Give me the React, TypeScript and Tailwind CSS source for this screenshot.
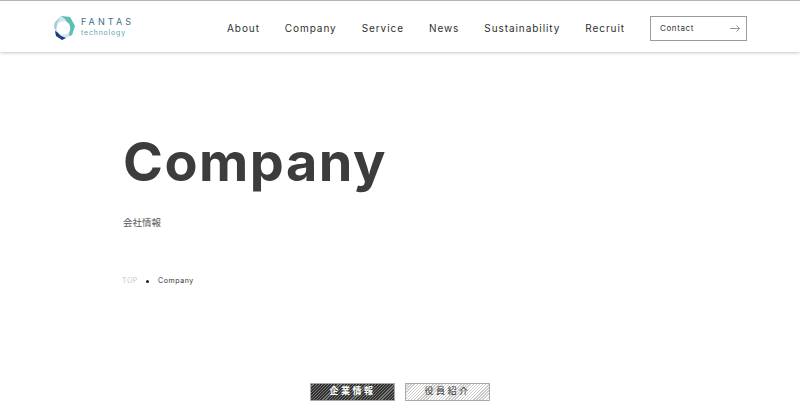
const NAV_ITEMS = ['About', 'Company', 'Service', 'News', 'Sustainability', 'Recruit'];

function Logo() {
  return (
    <div className="flex items-center gap-[5px]">
      <svg width="23" height="26" viewBox="0 0 23 26" fill="none">
        <path d="M8 1 L17 2 L22 11 L19 20 L9 25 L3 21 L1 11 Z" fill="#d3e6ee" />
        <path d="M8 1 L17 2 L22 11 L19 20 L16 21 L17 11 L12 4 Z" fill="#5fbfb2" />
        <path d="M2 16 L3 21 L9 25 L13 23 L8 21 L4 17 Z" fill="#1d3f78" />
        <path d="M8 1 L2 7 L1 12 L3 15 L4 8 Z" fill="#9cc9de" />
        <circle cx="10.5" cy="13" r="6.8" fill="#ffffff" />
      </svg>
      <div className="-mt-[2px] flex flex-col font-['Inter',sans-serif]">
        <span className="text-[9px] leading-[12px] tracking-[3.1px] text-[#3d6f8e]">FANTAS</span>
        <span className="text-[7px] leading-[10px] tracking-[0.8px] text-[#5fa5ac]">technology</span>
      </div>
    </div>
  );
}

function Header() {
  return (
    <header className="h-[52px] shrink-0 flex items-center justify-between pt-[3px] pl-[53px] pr-[53px] border-t border-[#b4b4b4] bg-white shadow-[0_1px_3px_rgba(0,0,0,0.22)]">
      <Logo />
      <div className="flex items-center gap-[25px]">
        <nav className="flex items-center gap-[25px] text-[10px] tracking-[0.93px] text-[#2f2f2f] font-['Inter',sans-serif]">
          {NAV_ITEMS.map(item => (
            <span key={item}>{item}</span>
          ))}
        </nav>
        <div className="w-[97px] h-[25px] flex items-center justify-between pl-[9px] pr-[6px] border border-[#9a9a9a] text-[8px] tracking-[0.6px] text-[#333] font-['Inter',sans-serif]">
          <span>Contact</span>
          <svg width="10" height="7" viewBox="0 0 10 7" fill="none" stroke="#666" strokeWidth="0.7">
            <path d="M0 3.5 H9.5 M6.5 0.5 L9.5 3.5 L6.5 6.5" />
          </svg>
        </div>
      </div>
    </header>
  );
}

export default function App() {
  return (
    <div className="w-[800px] h-[419px] overflow-hidden flex flex-col bg-white font-['Liberation_Sans','Noto_Sans_CJK_JP',sans-serif]">
      <Header />
      <main className="flex-1 flex flex-col">
        <section className="pl-[123px] pt-[78px]">
          <h1 className="text-[54px] leading-[64px] font-bold tracking-[1.5px] text-[#3c3c3c] font-['Inter',sans-serif]">Company</h1>
          <p className="mt-[22px] text-[9.5px] leading-[14px] text-[#555]">会社情報</p>
          <div className="-ml-[1px] mt-[45px] flex items-center text-[7px] leading-[12px] tracking-[0.6px] font-['Inter',sans-serif]">
            <span className="text-[#c8c8c8]">TOP</span>
            <span className="ml-[8px] w-[3px] h-[3px] rounded-full bg-[#222]" />
            <span className="ml-[9px] text-[#333]">Company</span>
          </div>
        </section>
        <div className="mt-[96px] flex justify-center gap-[10px]">
          <div className="w-[85px] h-[18px] flex items-center justify-center border border-[#aaa] text-[9px] tracking-[2.5px] font-bold text-white bg-[repeating-linear-gradient(135deg,#333_0,#333_1.4px,#777_1.4px,#777_2.2px)]">
            企業情報
          </div>
          <div className="w-[85px] h-[18px] flex items-center justify-center border border-[#aaa] text-[9px] tracking-[2.5px] text-[#333] bg-[repeating-linear-gradient(135deg,#fff_0,#fff_1.2px,#ccc_1.2px,#ccc_2.2px)]">
            役員紹介
          </div>
        </div>
      </main>
    </div>
  );
}
